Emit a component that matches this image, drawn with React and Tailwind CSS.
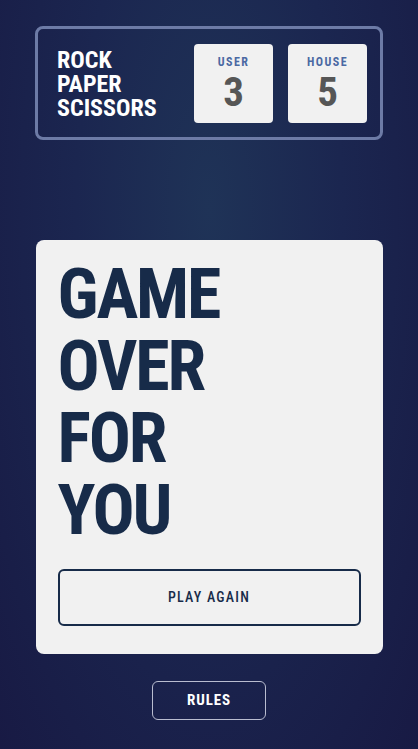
export default function App() {
  return (
    <div className="min-h-[749px] w-full flex flex-col items-center bg-[radial-gradient(ellipse_at_50%_28%,#1f3357_0%,#1b2650_45%,#181a44_100%)] font-['Roboto',sans-serif] font-stretch-condensed">
      <div className="mt-[26px] w-[348px] h-[114px] rounded-[8px] border-[3px] border-[#6d7ba6] flex items-center pl-[19px] pr-[13px]">
        <div className="text-white font-bold text-[24px] leading-[24px] flex-1 pt-[1px]">
          ROCK<br />PAPER<br />SCISSORS
        </div>
        <div className="flex gap-[15px]">
          <div className="w-[79px] h-[79px] bg-[#f1f1f1] rounded-[4px] flex flex-col items-center pt-[11px]">
            <span className="text-[12px] font-bold tracking-[0.12em] text-[#4b69a3] leading-[14px]">USER</span>
            <span className="text-[41px] font-bold text-[#565656] leading-[46px]">3</span>
          </div>
          <div className="w-[79px] h-[79px] bg-[#f1f1f1] rounded-[4px] flex flex-col items-center pt-[11px]">
            <span className="text-[12px] font-bold tracking-[0.12em] text-[#4b69a3] leading-[14px]">HOUSE</span>
            <span className="text-[41px] font-bold text-[#565656] leading-[46px]">5</span>
          </div>
        </div>
      </div>

      <div className="mt-[100px] w-[347px] h-[414px] bg-[#f1f1f1] rounded-[8px] px-[22px] pt-[18px] flex flex-col">
        <div className="text-[#172b49] font-bold text-[70px] leading-[72px] tracking-[-0.03em]">
          GAME<br />OVER<br />FOR<br />YOU
        </div>
        <button className="mt-[23px] h-[57px] w-full border-2 border-[#172b49] rounded-[6px] text-[#172b49] text-[14px] tracking-[0.09em] font-medium">
          PLAY AGAIN
        </button>
      </div>

      <button className="mt-[27px] w-[114px] h-[39px] border border-[#b9bdd0] rounded-[6px] text-white font-bold text-[15px] tracking-[0.06em]">
        RULES
      </button>
    </div>
  );
}
